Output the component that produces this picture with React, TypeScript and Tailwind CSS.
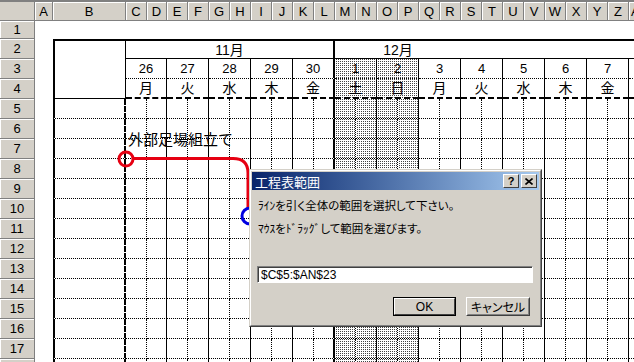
import React from "react";

const LETTERS = ["C", "D", "E", "F", "G", "H", "I", "J", "K", "L", "M", "N", "O", "P", "Q", "R", "S", "T", "U", "V", "W", "X", "Y", "Z"];

const DAYS = [
  { n: "26", w: "月" },
  { n: "27", w: "火" },
  { n: "28", w: "水" },
  { n: "29", w: "木" },
  { n: "30", w: "金" },
  { n: "1", w: "土" },
  { n: "2", w: "日" },
  { n: "3", w: "月" },
  { n: "4", w: "火" },
  { n: "5", w: "水" },
  { n: "6", w: "木" },
  { n: "7", w: "金" },
  { n: "", w: "" },
];

const STIPPLE = "bg-[conic-gradient(#444_25%,#fff_0)] bg-[length:2px_2px]";

function ColHead({ w, children }: { w: string; children: React.ReactNode }) {
  return (
    <div className={`${w} shrink-0 h-full bg-[#d4d0c8] border-r border-b border-[#808080] shadow-[inset_1px_1px_0_#fff] flex items-center justify-center text-[13px] leading-none`}>
      {children}
    </div>
  );
}

function RowHead({ h, n }: { h: string; n?: number }) {
  return (
    <div className={`${h} shrink-0 bg-[#d4d0c8] border-r border-b border-[#808080] shadow-[inset_1px_1px_0_#fff] flex items-center justify-center text-[13px] leading-none`}>
      {n}
    </div>
  );
}

function GridRow() {
  return (
    <div className="flex h-[20px] shrink-0">
      <div className="w-[18px] shrink-0" />
      <div className="w-[73px] shrink-0 border-l-2 border-r-2 border-b border-black [border-right-style:dashed] [border-bottom-style:dotted]" />
      {LETTERS.map((l, i) => {
        const w = i === 1 ? "w-[20px]" : "w-[21px]";
        const right = i === 9 ? "border-r-2" : i % 2 === 1 ? "border-r" : "border-r [border-right-style:dotted]";
        const shade = i >= 10 && i <= 13 ? STIPPLE : "";
        return <div key={l} className={`${w} shrink-0 ${right} border-b border-black [border-bottom-style:dotted] ${shade}`} />;
      })}
      <div className="w-[21px] shrink-0 border-r border-b border-black [border-right-style:dotted] [border-bottom-style:dotted]" />
    </div>
  );
}

export default function App() {
  const rows = [5, 6, 7, 8, 9, 10, 11, 12, 13, 14, 15, 16, 17];
  return (
    <div className="relative w-[634px] h-[362px] overflow-hidden bg-white text-black font-['Liberation_Sans','Noto_Sans_CJK_JP',sans-serif]">
      <div className="h-[2px] bg-[#808080]" />

      {/* column headers */}
      <div className="flex h-[19px]">
        <div className="w-[35px] shrink-0 bg-[#d4d0c8] border-r border-b border-[#808080]" />
        <ColHead w="w-[18px]">A</ColHead>
        <ColHead w="w-[73px]">B</ColHead>
        {LETTERS.map((l, i) => (
          <ColHead key={l} w={i === 1 ? "w-[20px]" : "w-[21px]"}>
            {l}
          </ColHead>
        ))}
        <div className="w-[5px] shrink-0 h-full bg-[#d4d0c8] border-b border-[#808080] shadow-[inset_1px_1px_0_#fff] overflow-hidden flex items-center text-[13px] leading-none pl-[2px]">
          A
        </div>
      </div>

      <div className="flex">
        {/* row headers */}
        <div className="w-[35px] shrink-0 flex flex-col">
          <RowHead h="h-[18px]" n={1} />
          {[2, 3, 4, ...rows].map((n) => (
            <RowHead key={n} h="h-[20px]" n={n} />
          ))}
          <RowHead h="h-[20px]" />
        </div>

        {/* sheet */}
        <div className="flex flex-col">
          <div className="h-[18px] shrink-0" />

          <div className="flex h-[60px] shrink-0">
            <div className="w-[18px] shrink-0" />
            <div className="w-[73px] shrink-0 border-l-2 border-t-2 border-r border-b border-black" />
            <div className="flex flex-col">
              <div className="flex h-[20px]">
                <div className="w-[209px] shrink-0 border-t-2 border-r-2 border-b border-black flex items-center justify-center text-[14px] leading-none">
                  11月
                </div>
                <div className="w-[126px] shrink-0 border-t-2 border-b border-black flex items-center justify-center text-[14px] leading-none">
                  12月
                </div>
                <div className="w-[200px] shrink-0 border-t-2 border-b border-black" />
              </div>
              <div className="flex h-[20px]">
                {DAYS.map((d, i) => (
                  <div
                    key={i}
                    className={`${i === 0 ? "w-[41px]" : "w-[42px]"} shrink-0 ${i === 4 ? "border-r-2" : "border-r"} border-b border-black [border-bottom-style:dotted] flex items-center justify-center text-[13px] leading-none ${i === 5 || i === 6 ? STIPPLE : ""}`}
                  >
                    {d.n}
                  </div>
                ))}
              </div>
              <div className="flex h-[20px]">
                {DAYS.map((d, i) => (
                  <div
                    key={i}
                    className={`${i === 0 ? "w-[41px]" : "w-[42px]"} shrink-0 ${i === 4 ? "border-r-2" : "border-r"} border-b-2 border-black [border-bottom-style:dashed] flex items-center justify-center text-[14px] leading-none ${i === 5 || i === 6 ? STIPPLE : ""}`}
                  >
                    {d.w}
                  </div>
                ))}
              </div>
            </div>
          </div>

          {rows.map((r) => (
            <GridRow key={r} />
          ))}
          <GridRow />
        </div>
      </div>

      {/* drawn process line */}
      <svg className="absolute left-0 top-0 pointer-events-none" width="634" height="362">
        <circle cx="126" cy="159" r="7" fill="none" stroke="#e60012" strokeWidth="3" />
        <path d="M133 158.5 H233 Q248 158.5 248 173 V208" fill="none" stroke="#e60012" strokeWidth="3" />
        <circle cx="250" cy="216" r="8" fill="none" stroke="#0000e0" strokeWidth="3" />
      </svg>
      <div className="absolute left-[128px] top-[130px] text-[15px] leading-[18px] font-['Noto_Sans_CJK_JP',sans-serif]">
        外部足場組立て
      </div>

      {/* dialog */}
      <div className="absolute left-[249px] top-[169px] w-[293px] h-[158px] bg-[#d4d0c8] border border-t-[#d4d0c8] border-l-[#d4d0c8] border-r-[#404040] border-b-[#404040]">
        <div className="h-full border border-t-white border-l-white border-r-[#808080] border-b-[#808080] p-px flex flex-col">
          <div className="h-[18px] shrink-0 bg-gradient-to-r from-[#0a246a] to-[#a6caf0] flex items-center pl-[3px] pr-[2px]">
            <span className="text-white text-[13px] leading-none font-['Noto_Sans_CJK_JP',sans-serif]">工程表範囲</span>
            <div className="ml-auto flex gap-[2px]">
              <div className="w-[16px] h-[14px] bg-[#d4d0c8] border border-t-white border-l-white border-r-[#404040] border-b-[#404040] flex items-center justify-center text-[11px] font-bold leading-none">
                ?
              </div>
              <div className="w-[16px] h-[14px] bg-[#d4d0c8] border border-t-white border-l-white border-r-[#404040] border-b-[#404040] flex items-center justify-center">
                <svg width="8" height="7" viewBox="0 0 8 7">
                  <path d="M0.5 0.5 L7.5 6.5 M7.5 0.5 L0.5 6.5" stroke="#000" strokeWidth="1.6" />
                </svg>
              </div>
            </div>
          </div>

          <div className="flex-1 flex flex-col pl-[5px] pr-[9px] pt-[7px] text-[11.5px] leading-[16px] font-['Noto_Sans_CJK_JP',sans-serif] [font-feature-settings:'palt']">
            <p className="pl-px">ﾗｲﾝを引く全体の範囲を選択して下さい。</p>
            <p className="pl-px mt-[7px]">ﾏｳｽをﾄﾞﾗｯｸﾞして範囲を選びます。</p>
            <div className="mt-[30px] w-[276px] h-[17px] bg-white border border-t-[#808080] border-l-[#808080] border-r-white border-b-white shadow-[inset_1px_1px_0_#404040] flex items-center pl-[3px] text-[12px] leading-none font-['Liberation_Sans',sans-serif]">
              $C$5:$AN$23
            </div>
            <div className="mt-[14px] flex justify-end gap-[10px]">
              <div className="w-[63px] h-[19px] border border-black">
                <div className="h-full border border-t-white border-l-white border-r-[#404040] border-b-[#404040] flex items-center justify-center text-[12px] leading-none font-['Liberation_Sans',sans-serif]">
                  OK
                </div>
              </div>
              <div className="w-[64px] h-[19px] border border-t-white border-l-white border-r-[#404040] border-b-[#404040]">
                <div className="h-full border border-t-[#d4d0c8] border-l-[#d4d0c8] border-r-[#808080] border-b-[#808080] flex items-center justify-center text-[12px] leading-none">
                  キャンセル
                </div>
              </div>
            </div>
          </div>
        </div>
      </div>
    </div>
  );
}
